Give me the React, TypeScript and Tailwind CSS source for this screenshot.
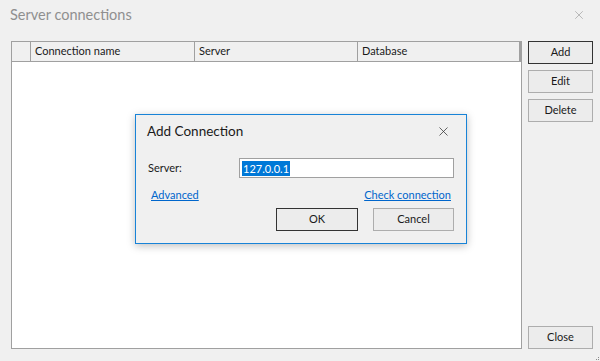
import { X } from 'lucide-react'

const font = { fontFamily: 'Lato, "Noto Sans", sans-serif' }

const Btn = ({ label, primary, className = '' }: { label: string; primary?: boolean; className?: string }) => (
  <button
    className={`flex h-[23px] items-center justify-center bg-[#ececec] text-[11px] text-[#1a1a1a] ${
      primary ? 'border border-[#333333]' : 'border border-[#adadad]'
    } ${className}`}
  >
    {label}
  </button>
)

export default function App() {
  return (
    <div
      className="relative flex h-[361px] w-[600px] flex-col overflow-hidden bg-[#f0f0f0]"
      style={font}
    >
      <header className="flex h-[41px] items-start justify-between pl-[10px] pr-[14px] pt-[4px]">
        <span className="text-[14.5px] text-[#8f8f8f]">Server connections</span>
        <X className="mt-[4px] h-[14px] w-[14px] text-[#9a9a9a]" strokeWidth={1.1} />
      </header>

      <div className="flex pl-[11px]">
        <div className="flex h-[308px] w-[511px] flex-col border border-[#a0a0a0] bg-white">
          <div className="flex h-[20px] border-b border-[#a0a0a0] bg-[#f0f0f0] text-[11px] text-[#1a1a1a]">
            <div className="w-[19px] border-r border-[#a0a0a0]" />
            <div className="flex w-[164px] items-center border-r border-[#a0a0a0] pl-[4px]">
              Connection name
            </div>
            <div className="flex w-[163px] items-center border-r border-[#a0a0a0] pl-[4px]">
              Server
            </div>
            <div className="flex flex-1 items-center border-r-2 border-[#a0a0a0] pl-[4px]">
              Database
            </div>
          </div>
        </div>

        <div className="ml-[6px] flex w-[65px] flex-col">
          <Btn label="Add" primary />
          <Btn label="Edit" className="mt-[6px]" />
          <Btn label="Delete" className="mt-[6px]" />
          <div className="flex-1" />
          <Btn label="Close" />
        </div>
      </div>

      <div className="absolute bottom-[1px] right-[1px] grid grid-cols-3 gap-[1px]">
        <span />
        <span />
        <span className="h-[1px] w-[1px] bg-[#8a8a8a]" />
        <span />
        <span className="h-[1px] w-[1px] bg-[#8a8a8a]" />
        <span className="h-[1px] w-[1px] bg-[#8a8a8a]" />
      </div>

      {/* Add Connection dialog */}
      <div className="absolute left-[135px] top-[114px] flex h-[130px] w-[332px] flex-col border border-[#1883d7] bg-[#f0f0f0] shadow-[0_2px_8px_rgba(0,0,0,0.25)]">
        <div className="flex items-center justify-between pl-[11px] pr-[15px] pt-[6px]">
          <span className="text-[13.5px] text-[#1a1a1a]">Add Connection</span>
          <X className="h-[15px] w-[15px] text-[#333333]" strokeWidth={1.2} />
        </div>

        <div className="mt-[17px] flex items-center pl-[12px] pr-[12px]">
          <span className="w-[91px] text-[11px] text-[#1a1a1a]">Server:</span>
          <div className="flex h-[20px] flex-1 items-center border border-[#a0a0a0] bg-white pl-[2px]">
            <span className="bg-[#0078d7] px-[1px] text-[11px] leading-[15px] text-white">127.0.0.1</span>
          </div>
        </div>

        <div className="mt-[9px] flex items-center justify-between pl-[15px] pr-[15px] text-[11px]">
          <span className="text-[#0066cc] underline">Advanced</span>
          <span className="text-[#0066cc] underline">Check connection</span>
        </div>

        <div className="mt-[4px] flex justify-end gap-[15px] pr-[12px]">
          <Btn label="OK" primary className="h-[22px] w-[82px]" />
          <Btn label="Cancel" className="h-[22px] w-[81px]" />
        </div>
      </div>
    </div>
  )
}
